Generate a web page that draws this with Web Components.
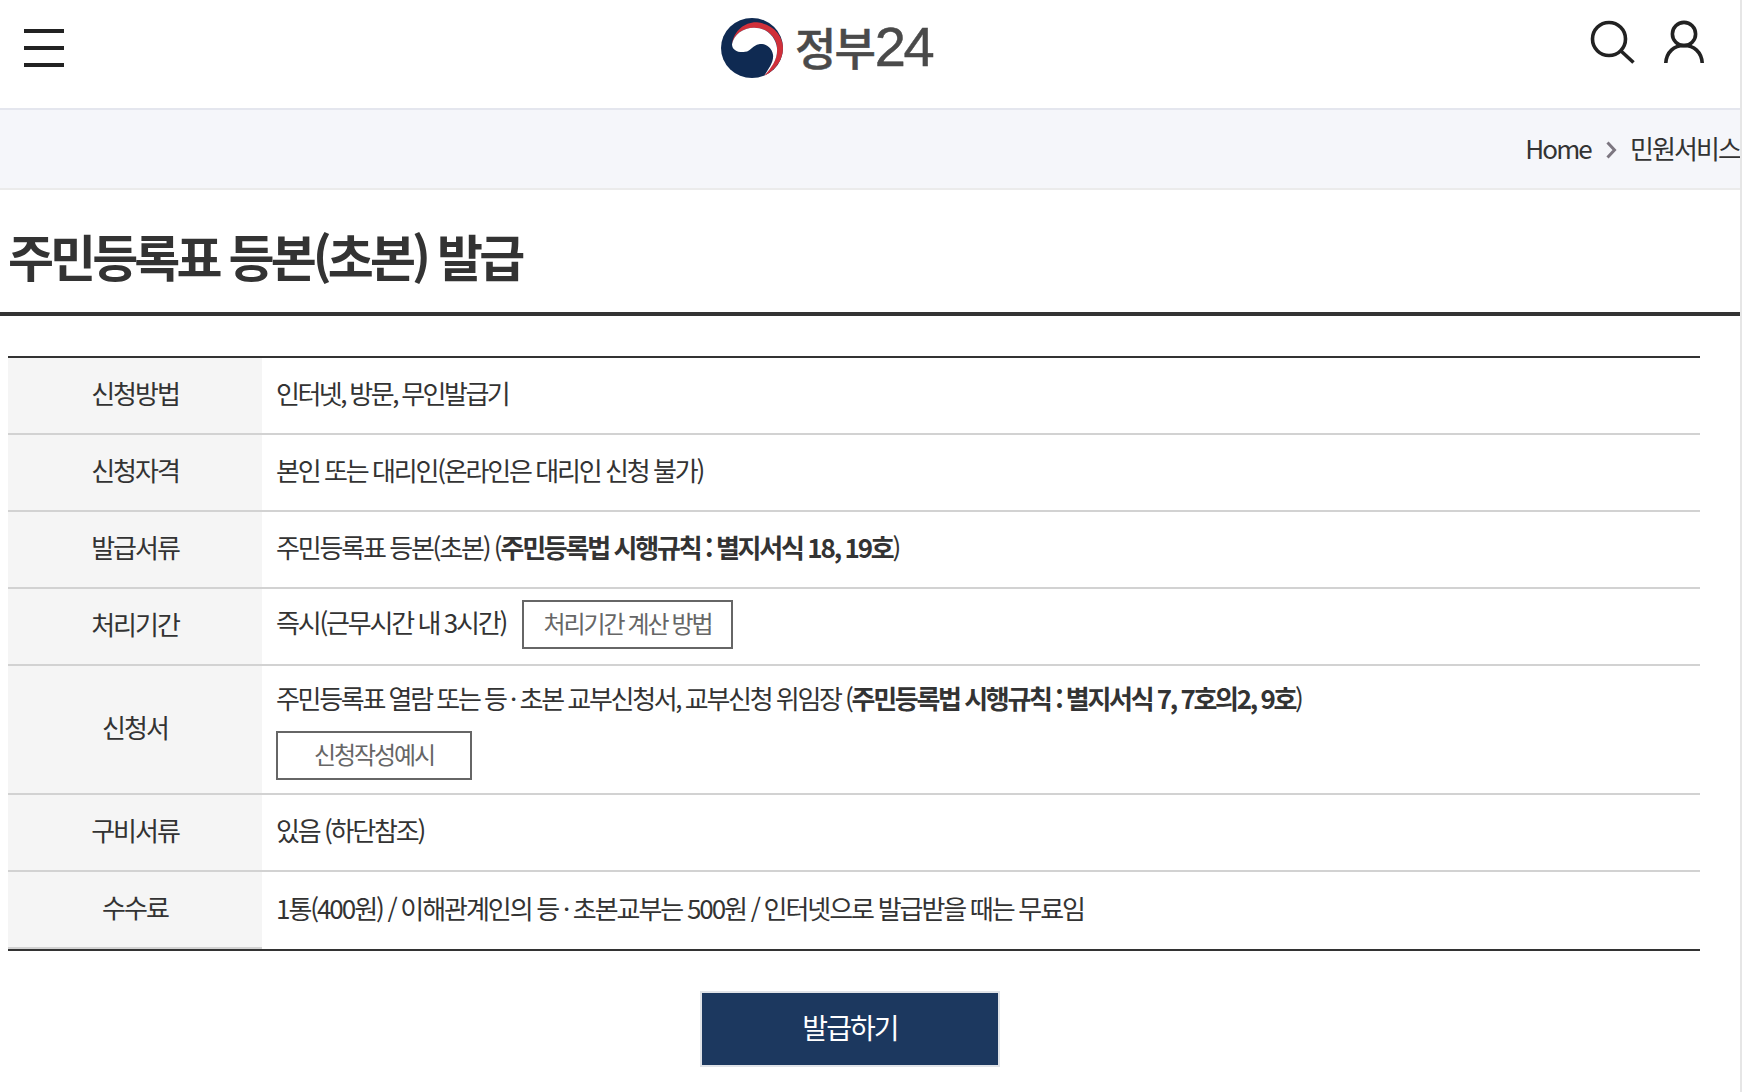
<!DOCTYPE html>
<html lang="ko">
<head>
<meta charset="utf-8">
<title>주민등록표 등본(초본) 발급</title>
<style>
  html, body { margin: 0; background: #fff; }
  body {
    font-family: "Noto Sans CJK KR", "Noto Sans", sans-serif;
    color: #333;
    width: 1740px;
    min-height: 1092px;
    border-right: 2px solid #e6e6e6;
    overflow: hidden;
  }
</style>
</head>
<body>
<gov-header></gov-header>
<gov-breadcrumb>
  <span>Home</span>
  <span>민원서비스</span>
</gov-breadcrumb>
<page-title>주민등록표 등본(초본) 발급</page-title>
<info-table>
  <info-row label="신청방법"><span style="letter-spacing:-2.5px">인터넷, 방문, 무인발급기</span></info-row>
  <info-row label="신청자격">본인 또는 대리인(온라인은 대리인 신청 불가)</info-row>
  <info-row label="발급서류">주민등록표 등본(초본) (<b>주민등록법 시행규칙 : 별지서식 18, 19호</b>)</info-row>
  <info-row label="처리기간"><span style="margin-bottom:4px">즉시(근무시간 내 3시간)</span><outline-button style="width:211px;margin:0 0 -2px 16px">처리기간 계산 방법</outline-button></info-row>
  <info-row label="신청서" tall>
    <div style="letter-spacing:-2.3px">주민등록표 열람 또는 등 · 초본 교부신청서, 교부신청 위임장 (<b>주민등록법 시행규칙 : 별지서식 7, 7호의2, 9호</b>)</div>
    <outline-button style="width:196px;margin-top:15px">신청작성예시</outline-button>
  </info-row>
  <info-row label="구비서류">있음 (하단참조)</info-row>
  <info-row label="수수료" last><span style="letter-spacing:-2.05px">1통(400원) / 이해관계인의 등 · 초본교부는 500원 / 인터넷으로 발급받을 때는 무료임</span></info-row>
</info-table>
<primary-button>발급하기</primary-button>

<script>
class GovHeader extends HTMLElement {
  constructor() {
    super();
    this.attachShadow({ mode: 'open' });
    this.shadowRoot.innerHTML = `
      <style>
        :host {
          display: flex;
          align-items: flex-start;
          height: 108px;
          border-bottom: 2px solid #e4e6ee;
          background: #fff;
        }
        .menu {
          display: flex;
          flex-direction: column;
          gap: 13px;
          width: 40px;
          margin: 29px 0 0 24px;
        }
        .menu i { display: block; height: 4px; background: #222; }
        .logo {
          display: flex;
          align-items: center;
          height: 60px;
          margin: 18px 0 0 657px;
        }
        .logo .name {
          margin: -2px 0 0 12px;
          font-size: 45px;
          line-height: 60px;
          letter-spacing: -2px;
          font-weight: 500;
          color: #4a4a4a;
          white-space: nowrap;
          -webkit-text-stroke: 0.5px #4a4a4a;
        }
        .logo .num {
          font-family: "Liberation Sans", sans-serif;
          font-size: 56px;
          letter-spacing: -2.5px;
          margin-left: 1px;
        }
        .tools { display: flex; gap: 24px; margin: 19px 34px 0 auto; }
        svg { display: block; }
      </style>
      <div class="menu"><i></i><i></i><i></i></div>
      <div class="logo">
        <svg width="62" height="60" viewBox="0 0 62 62" preserveAspectRatio="none">
          <circle cx="31" cy="31" r="31" fill="#0f2a52"/>
          <path fill="#d0303a" d="M11 27C13 13 24 4 36 4.5C52 6 62 18 62 31C62 44 54 54 43 60C51 50 57 42 56 31C56 20 46 10 33 10C22 10 13 17 11 27Z"/>
          <path fill="#fff" d="M11 27C13 17 22 10 33 10C46 10 55 20 56 31C57 42 51 51 43 60C48 52 53 45 52 38C51 30 44 26 38 27C32 28 30 34 24 35C17 36 11 33 11 27Z"/>
        </svg>
        <span class="name">정부<span class="num">24</span></span>
      </div>
      <div class="tools">
        <svg width="48" height="46" viewBox="0 0 48 46" fill="none" stroke="#222" stroke-width="3.6">
          <circle cx="19" cy="20" r="16.5"/>
          <path d="M31 32L43.5 43.5"/>
        </svg>
        <svg width="44" height="46" viewBox="0 0 44 46" fill="none" stroke="#222" stroke-width="3.6">
          <circle cx="22" cy="15" r="11.6"/>
          <path d="M3.8 44C4.5 33 12 26.5 22 26.5C32 26.5 39.5 33 40.2 44"/>
        </svg>
      </div>
    `;
  }
}

class GovBreadcrumb extends HTMLElement {
  constructor() {
    super();
    this.attachShadow({ mode: 'open' });
    this.shadowRoot.innerHTML = `
      <style>
        :host {
          display: flex;
          justify-content: flex-end;
          align-items: center;
          box-sizing: border-box;
          height: 80px;
          padding-bottom: 4px;
          border-bottom: 2px solid #ebebeb;
          background: #f5f6fa;
          font-size: 26px;
          letter-spacing: -1.9px;
          color: #333;
          white-space: nowrap;
          overflow: hidden;
        }
        ::slotted(span:first-child) { margin-right: 15px; }
        ::slotted(span:last-child) { margin-left: 13px; }
        svg { display: block; margin-top: 6px; }
      </style>
    `;
    // one slot per crumb, with the chevron between them
    const items = [...this.querySelectorAll('span')];
    items.forEach((item, i) => {
      item.slot = 'item' + i;
      const slot = document.createElement('slot');
      slot.name = item.slot;
      this.shadowRoot.appendChild(slot);
      if (i < items.length - 1) {
        const holder = document.createElement('template');
        holder.innerHTML = '<svg width="11" height="18" viewBox="0 0 11 18"><path d="M1.5 1.5L8.5 9L1.5 16.5" fill="none" stroke="#7c7680" stroke-width="3"/></svg>';
        this.shadowRoot.appendChild(holder.content);
      }
    });
  }
}

class PageTitle extends HTMLElement {
  constructor() {
    super();
    this.attachShadow({ mode: 'open' });
    this.shadowRoot.innerHTML = `
      <style>
        :host {
          display: block;
          height: 122px;
          border-bottom: 4px solid #333;
          padding-left: 8px;
          font-size: 50px;
          font-weight: 700;
          line-height: 130px;
          letter-spacing: -3.9px;
          color: #333;
          white-space: nowrap;
        }
      </style>
      <slot></slot>
    `;
  }
}

class InfoTable extends HTMLElement {
  constructor() {
    super();
    this.attachShadow({ mode: 'open' });
    this.shadowRoot.innerHTML = `
      <style>
        :host {
          display: block;
          width: 1692px;
          margin: 40px 0 0 8px;
          border-top: 2px solid #333;
          border-bottom: 2px solid #333;
        }
      </style>
      <slot></slot>
    `;
  }
}

class InfoRow extends HTMLElement {
  constructor() {
    super();
    this.attachShadow({ mode: 'open' });
    this.shadowRoot.innerHTML = `
      <style>
        :host {
          display: grid;
          grid-template-columns: 254px 1fr;
          min-height: 75px;
          border-bottom: 2px solid #d2d2d2;
          font-size: 26px;
          letter-spacing: -2px;
          color: #333;
        }
        :host([last]) { border-bottom: 0; min-height: 77px; }
        :host([last]) .label { border-bottom: 2px solid #d2d2d2; }
        :host([tall]) { min-height: 127px; }
        .label {
          display: flex;
          align-items: center;
          justify-content: center;
          padding-bottom: 6px;
          background: #f5f5f5;
        }
        .value {
          display: flex;
          flex-wrap: wrap;
          align-items: center;
          align-content: center;
          padding: 0 0 6px 14px;
          letter-spacing: -2.2px;
          word-spacing: -0.5px;
        }
        :host([tall]) .value { display: block; padding: 0 0 0 14px; }
      </style>
      <div class="label"></div>
      <div class="value"><slot></slot></div>
    `;
    this.shadowRoot.querySelector('.label').textContent = this.getAttribute('label');
  }
}

class OutlineButton extends HTMLElement {
  constructor() {
    super();
    this.attachShadow({ mode: 'open' });
    this.shadowRoot.innerHTML = `
      <style>
        :host {
          display: inline-flex;
          align-items: center;
          justify-content: center;
          box-sizing: border-box;
          height: 49px;
          padding-bottom: 4px;
          border: 2px solid #666;
          font-size: 24px;
          letter-spacing: -2.1px;
          color: #666;
          background: #fff;
        }
      </style>
      <slot></slot>
    `;
  }
}

class PrimaryButton extends HTMLElement {
  constructor() {
    super();
    this.attachShadow({ mode: 'open' });
    this.shadowRoot.innerHTML = `
      <style>
        :host {
          display: flex;
          align-items: center;
          justify-content: center;
          box-sizing: border-box;
          width: 300px;
          height: 76px;
          padding-bottom: 4px;
          margin: 40px 0 0 700px;
          border: 2px solid #e0e3e8;
          background: #1c385f;
          color: #fff;
          font-size: 28px;
          letter-spacing: -1.9px;
        }
      </style>
      <slot></slot>
    `;
  }
}

customElements.define('gov-header', GovHeader);
customElements.define('gov-breadcrumb', GovBreadcrumb);
customElements.define('page-title', PageTitle);
customElements.define('info-table', InfoTable);
customElements.define('info-row', InfoRow);
customElements.define('outline-button', OutlineButton);
customElements.define('primary-button', PrimaryButton);
</script>
</body>
</html>
